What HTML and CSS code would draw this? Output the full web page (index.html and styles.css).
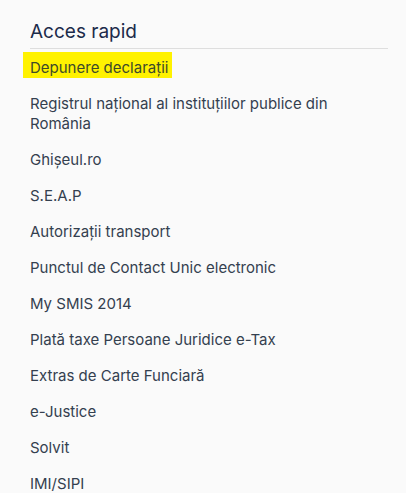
FILE: index.html
```html
<!DOCTYPE html>
<html lang="ro">
<head>
<meta charset="utf-8">
<link rel="stylesheet" href="styles.css">
</head>
<body>
<section class="quick">
  <h2 class="quick-title">Acces rapid</h2>
  <ul class="quick-list">
    <li><a class="quick-link is-active" href="#">Depunere declarații</a></li>
    <li><a class="quick-link" href="#">Registrul național al instituțiilor publice din România</a></li>
    <li><a class="quick-link" href="#">Ghișeul.ro</a></li>
    <li><a class="quick-link" href="#">S.E.A.P</a></li>
    <li><a class="quick-link" href="#">Autorizații transport</a></li>
    <li><a class="quick-link" href="#">Punctul de Contact Unic electronic</a></li>
    <li><a class="quick-link" href="#">My SMIS 2014</a></li>
    <li><a class="quick-link" href="#">Plată taxe Persoane Juridice e-Tax</a></li>
    <li><a class="quick-link" href="#">Extras de Carte Funciară</a></li>
    <li><a class="quick-link" href="#">e-Justice</a></li>
    <li><a class="quick-link" href="#">Solvit</a></li>
    <li><a class="quick-link" href="#">IMI/SIPI</a></li>
  </ul>
</section>
</body>
</html>
```
FILE: styles.css
```css
html, body {
  margin: 0;
  padding: 0;
  background: #fafafa;
}
body {
  font-family: Inter, "Noto Sans", sans-serif;
  overflow: hidden;
}
.quick {
  padding: 20px 18px 0 30px;
}
.quick-title {
  margin: 0;
  font-size: 19px;
  line-height: 24px;
  font-weight: 400;
  color: #1c2b4a;
  padding-bottom: 4px;
  border-bottom: 1px solid #dedede;
}
.quick-list {
  list-style: none;
  margin: 3px 0 0;
  padding: 0;
  display: flex;
  flex-direction: column;
  gap: 10px;
}
.quick-link {
  display: inline-block;
  margin-left: -7px;
  padding: 6px 4px 0 7px;
  font-size: 15px;
  line-height: 20px;
  color: #34404f;
  text-decoration: none;
}
.quick-link.is-active {
  background: #fff200;
  color: #3d4a2a;
}
```
